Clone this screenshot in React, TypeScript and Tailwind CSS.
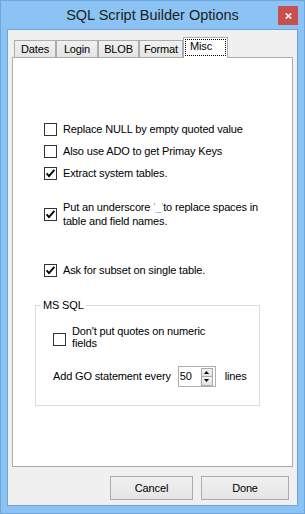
import React from "react";

const TABS = [
  { label: "Dates", w: "w-[42px]" },
  { label: "Login", w: "w-[42px]" },
  { label: "BLOB", w: "w-[41px]" },
  { label: "Format", w: "w-[44px]" },
];

function Box({ checked }: { checked?: boolean }) {
  return (
    <span className="w-[13px] h-[13px] shrink-0 border border-[#333333] bg-white flex items-center justify-center">
      {checked && (
        <svg width="11" height="11" viewBox="0 0 11 11">
          <path d="M1.6 5.4l2.4 2.7L9.4 1.9" fill="none" stroke="#000" strokeWidth="1.9" />
        </svg>
      )}
    </span>
  );
}

function Spinner() {
  return (
    <div className="w-[38px] h-[21px] border border-[#ABADB3] bg-white flex items-center">
      <span className="pl-[1px] leading-[13px]">50</span>
      <div className="ml-auto mr-[2px] flex flex-col gap-0">
        <div className="w-[12px] h-[9px] border border-[#ACACAC] bg-linear-to-b from-[#F2F2F2] to-[#E3E3E3] flex items-center justify-center">
          <svg width="5" height="3" viewBox="0 0 5 3">
            <path d="M0 3h5L2.5 0z" fill="#000" />
          </svg>
        </div>
        <div className="w-[12px] h-[9px] border border-t-0 border-[#ACACAC] bg-linear-to-b from-[#F2F2F2] to-[#E3E3E3] flex items-center justify-center">
          <svg width="5" height="3" viewBox="0 0 5 3">
            <path d="M0 0h5L2.5 3z" fill="#000" />
          </svg>
        </div>
      </div>
    </div>
  );
}

export default function App() {
  return (
    <div className="w-[305px] h-[514px] border border-[#6FA5DA] bg-[#8BC4F4] px-[6px] pb-[7px] flex flex-col font-['Liberation_Sans',Arial,sans-serif] text-[11px] tracking-[-0.15px] text-black">
      {/* title bar */}
      <div className="h-[28px] grid grid-cols-[1fr_auto_1fr] items-center">
        <div />
        <div className="text-[14.5px] tracking-normal text-[#1E1E1E] leading-none">SQL Script Builder Options</div>
        <div className="justify-self-end self-start mt-[5px] w-[20px] h-[19px] bg-[#C75050] flex items-center justify-center">
          <svg width="7" height="6" viewBox="0 0 7 6">
            <path d="M0.8 0.5l5.4 5M6.2 0.5L0.8 5.5" stroke="#fff" strokeWidth="1.6" />
          </svg>
        </div>
      </div>

      {/* client area */}
      <div className="flex-1 border border-[#6FA5DA] bg-[#F0F0F0] px-[4px] pt-[7px] flex flex-col">
        <div className="h-[20px] flex items-end pl-[2px] relative z-10">
          {TABS.map((t) => (
            <div
              key={t.label}
              className={`${t.w} h-[17px] border border-b-0 border-[#ACACAC] bg-linear-to-b from-[#F0F0F0] to-[#E5E5E5] flex items-center justify-center pt-[1px]`}
            >
              {t.label}
            </div>
          ))}
          <div className="w-[45px] h-[21px] -mb-px border border-b-0 border-[#ACACAC] bg-white p-[1px]">
            <div className="w-full h-[17px] border border-dotted border-black flex items-center pl-[4px] pb-[2px]">
              Misc
            </div>
          </div>
        </div>

        <div className="h-[410px] border border-[#ACACAC] bg-white flex flex-col">
          <div className="pl-[31px] mt-[60px] flex flex-col">
            <div className="h-[22px] flex items-center gap-[6px]">
              <Box />
              <span>Replace NULL by empty quoted value</span>
            </div>
            <div className="h-[22px] flex items-center gap-[6px]">
              <Box />
              <span>Also use ADO to get Primay Keys</span>
            </div>
            <div className="h-[22px] flex items-center gap-[6px]">
              <Box checked />
              <span>Extract system tables.</span>
            </div>
            <div className="mt-[16px] flex items-center gap-[6px] leading-[14px]">
              <Box checked />
              <span>
                Put an underscore <span className="text-[#7FB2E0]">'_'</span>to replace spaces in
                <br />
                table and field names.
              </span>
            </div>
            <div className="mt-[31px] h-[22px] flex items-center gap-[6px]">
              <Box checked />
              <span>Ask for subset on single table.</span>
            </div>
          </div>

          <fieldset className="mt-[18px] ml-[22px] w-[225px] border border-[#DCDCDC] pb-[18px]">
            <legend className="ml-[5px] px-[2px] leading-[13px]">MS SQL</legend>
            <div className="mt-[13px] pl-[17px] flex items-center gap-[6px] leading-[12px]">
              <span className="mt-[4px]">
                <Box />
              </span>
              <span>
                Don't put quotes on numeric
                <br />
                fields
              </span>
            </div>
            <div className="mt-[17px] pl-[17px] h-[21px] flex items-center">
              <span>Add GO statement every</span>
              <span className="ml-[7px]">
                <Spinner />
              </span>
              <span className="ml-[9px]">lines</span>
            </div>
          </fieldset>
        </div>

        <div className="mt-[9px] flex justify-end gap-[8px] pr-[4px]">
          <button className="w-[83px] h-[24px] border border-[#ACACAC] bg-linear-to-b from-[#F0F0F0] to-[#E5E5E5]">
            Cancel
          </button>
          <button className="w-[88px] h-[24px] border border-[#ACACAC] bg-linear-to-b from-[#F0F0F0] to-[#E5E5E5]">
            Done
          </button>
        </div>
      </div>
    </div>
  );
}
